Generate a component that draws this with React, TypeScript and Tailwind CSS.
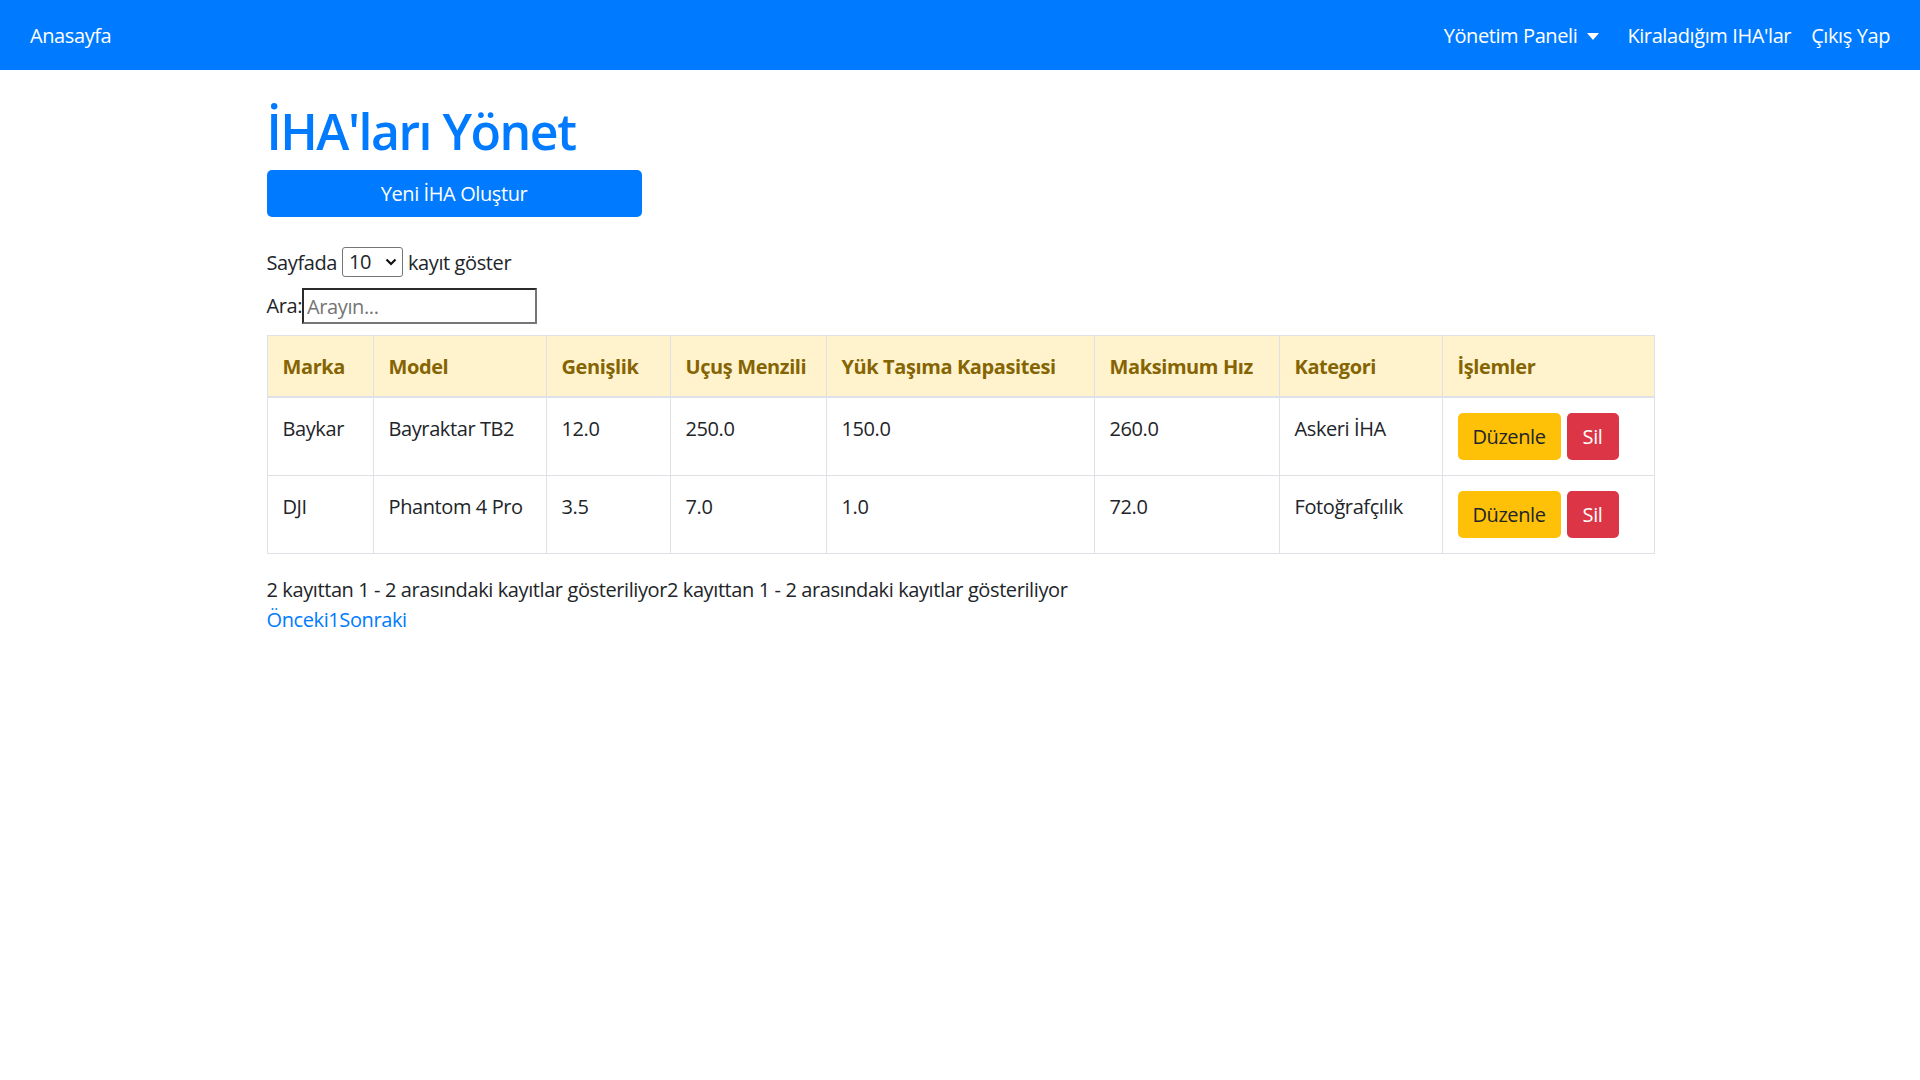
import React from "react";

// İHA yönetim sayfası — sabit örnek veriler
const rows = [
  { marka: "Baykar", model: "Bayraktar TB2", genislik: "12.0", menzil: "250.0", yuk: "150.0", hiz: "260.0", kategori: "Askeri İHA" },
  { marka: "DJI", model: "Phantom 4 Pro", genislik: "3.5", menzil: "7.0", yuk: "1.0", hiz: "72.0", kategori: "Fotoğrafçılık" },
];

const headers = ["Marka", "Model", "Genişlik", "Uçuş Menzili", "Yük Taşıma Kapasitesi", "Maksimum Hız", "Kategori", "İşlemler"];
const widths = [106, 173, 124, 156, 268, 185, 163, 212];

export default function App() {
  return (
    <div className="min-h-screen bg-white text-[20px] leading-[30px] tracking-[-0.02em] text-[#212529] font-['Open_Sans','Noto_Sans',sans-serif]">
      {/* Navbar */}
      <nav className="h-[70px] bg-[#007bff] flex items-center justify-between px-[30px] pt-[2px] text-white">
        <a className="text-[20px]">Anasayfa</a>
        <div className="flex items-center">
          <a className="flex items-center">
            Yönetim Paneli
            <span className="ml-[10px] w-0 h-0 border-l-[6px] border-r-[6px] border-t-[7px] border-l-transparent border-r-transparent border-t-white" />
          </a>
          <a className="ml-[28px]">Kiraladığım IHA'lar</a>
          <a className="ml-[20px]">Çıkış Yap</a>
        </div>
      </nav>

      <div className="w-[1387px] mx-auto pt-[31px]">
        <h1 className="text-[50px] leading-[60px] font-semibold tracking-[-0.03em] text-[#007bff] mb-[9px]">İHA'ları Yönet</h1>
        <button className="w-[375px] h-[47px] bg-[#007bff] text-white rounded-[5px]">Yeni İHA Oluştur</button>

        {/* Kayıt sayısı */}
        <div className="mt-[30px] h-[30px] flex items-center">
          <span className="pt-[2px]">Sayfada</span>
          <div className="relative ml-[5px] mr-[5px]">
            <select className="appearance-none w-[61px] h-[30px] border border-[#767676] rounded-[3px] pl-[6px] text-[20px] leading-[28px]" defaultValue="10">
              <option>10</option>
              <option>25</option>
              <option>50</option>
            </select>
            <svg className="absolute right-[6px] top-[11px] pointer-events-none" width="12" height="8" viewBox="0 0 12 8">
              <path d="M1.5 1.5 L6 6 L10.5 1.5" fill="none" stroke="#111" strokeWidth="2.2" />
            </svg>
          </div>
          <span className="pt-[2px]">kayıt göster</span>
        </div>

        {/* Arama */}
        <div className="mt-[11px] h-[36px] flex items-center">
          <span>Ara:</span>
          <input
            placeholder="Arayın..."
            className="w-[235px] h-[36px] border-2 border-t-[#2b2b2b] border-l-[#2b2b2b] border-r-[#767676] border-b-[#767676] px-[3px] text-[20px] placeholder:text-[#757575]"
          />
        </div>

        {/* Tablo */}
        <table className="mt-[11px] w-full table-fixed border-collapse border border-[#dee2e6]">
          <colgroup>
            {widths.map((w, i) => (
              <col key={i} style={{ width: w }} />
            ))}
          </colgroup>
          <thead className="bg-[#fff3cd] text-[#856404]">
            <tr>
              {headers.map((h) => (
                <th key={h} className="text-left font-bold whitespace-nowrap px-[15px] pt-[16px] pb-[14px] border border-[#dee2e6] border-b-2 align-middle">
                  {h}
                </th>
              ))}
            </tr>
          </thead>
          <tbody>
            {rows.map((r) => (
              <tr key={r.model}>
                {[r.marka, r.model, r.genislik, r.menzil, r.yuk, r.hiz, r.kategori].map((v, i) => (
                  <td key={i} className="px-[15px] pt-[16px] pb-[15px] border border-[#dee2e6] align-top">
                    {v}
                  </td>
                ))}
                <td className="px-[15px] py-[15px] border border-[#dee2e6] align-top">
                  <div className="flex gap-[6px]">
                    <button className="h-[47px] w-[103px] bg-[#ffc107] text-[#212529] rounded-[5px]">Düzenle</button>
                    <button className="h-[47px] w-[52px] bg-[#dc3545] text-white rounded-[5px]">Sil</button>
                  </div>
                </td>
              </tr>
            ))}
          </tbody>
        </table>

        <div className="mt-[21px]">
          2 kayıttan 1 - 2 arasındaki kayıtlar gösteriliyor2 kayıttan 1 - 2 arasındaki kayıtlar gösteriliyor
        </div>
        <div className="text-[#007bff]">
          <a>Önceki</a>
          <a>1</a>
          <a>Sonraki</a>
        </div>
      </div>
    </div>
  );
}
